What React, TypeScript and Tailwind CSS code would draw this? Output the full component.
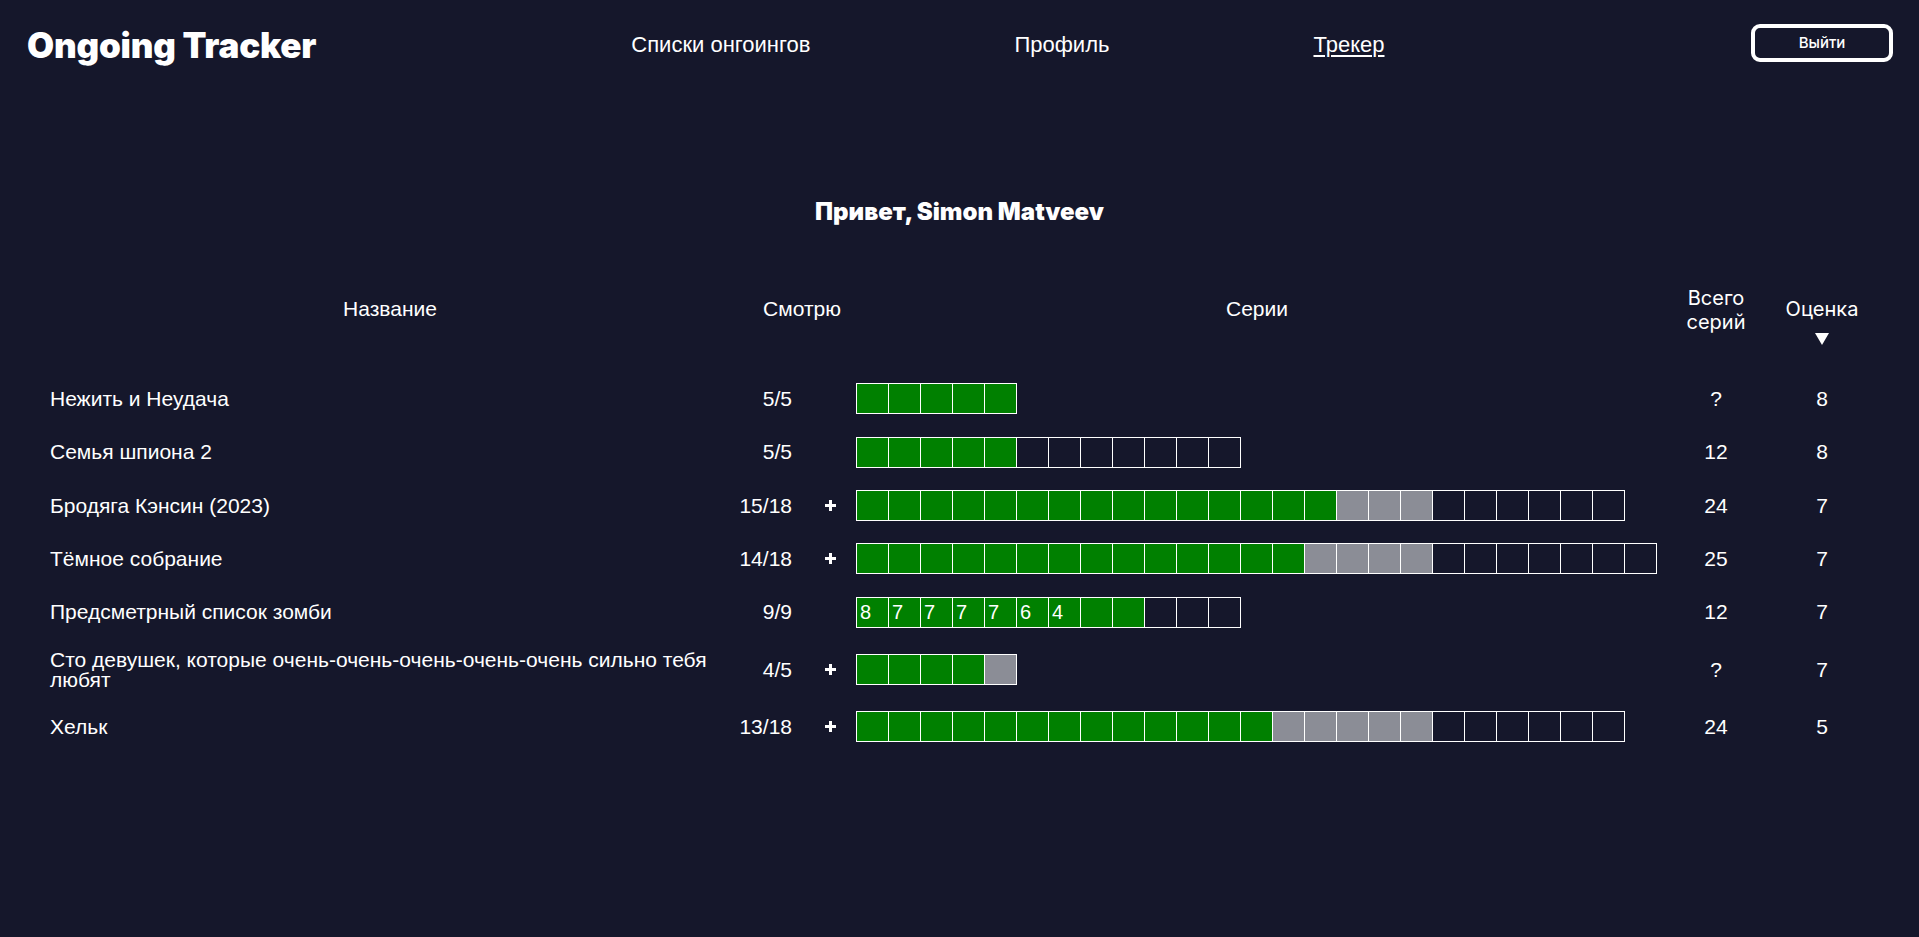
import React from 'react';

type Cell = 'g' | 's' | 'e';

interface Row {
  title: string;
  watched: string;
  plus: boolean;
  green: number;
  gray: number;
  empty: number;
  marks?: string[];
  total: string;
  score: string;
}

const rows: Row[] = [
  { title: 'Нежить и Неудача', watched: '5/5', plus: false, green: 5, gray: 0, empty: 0, total: '?', score: '8' },
  { title: 'Семья шпиона 2', watched: '5/5', plus: false, green: 5, gray: 0, empty: 7, total: '12', score: '8' },
  { title: 'Бродяга Кэнсин (2023)', watched: '15/18', plus: true, green: 15, gray: 3, empty: 6, total: '24', score: '7' },
  { title: 'Тёмное собрание', watched: '14/18', plus: true, green: 14, gray: 4, empty: 7, total: '25', score: '7' },
  {
    title: 'Предсметрный список зомби',
    watched: '9/9',
    plus: false,
    green: 9,
    gray: 0,
    empty: 3,
    marks: ['8', '7', '7', '7', '7', '6', '4'],
    total: '12',
    score: '7',
  },
  {
    title: 'Сто девушек, которые очень-очень-очень-очень-очень сильно тебя любят',
    watched: '4/5',
    plus: true,
    green: 4,
    gray: 1,
    empty: 0,
    total: '?',
    score: '7',
  },
  { title: 'Хельк', watched: '13/18', plus: true, green: 13, gray: 5, empty: 6, total: '24', score: '5' },
];

const cellColor: Record<Cell, string> = {
  g: 'bg-[#008000]',
  s: 'bg-[#8b8d96]',
  e: 'bg-transparent',
};

function PlusIcon() {
  return (
    <svg width="11" height="11" viewBox="0 0 11 11" className="block">
      <rect x="4" y="0" width="3" height="11" fill="white" />
      <rect x="0" y="4" width="11" height="3" fill="white" />
    </svg>
  );
}

function Episodes({ row }: { row: Row }) {
  const cells: Cell[] = [
    ...Array<Cell>(row.green).fill('g'),
    ...Array<Cell>(row.gray).fill('s'),
    ...Array<Cell>(row.empty).fill('e'),
  ];
  return (
    <div className="flex border-l border-y border-white w-max">
      {cells.map((c, i) => (
        <div
          key={i}
          className={`w-8 h-[29px] border-r border-white ${cellColor[c]} text-[20px] leading-[28px] pl-[3px] text-white`}
        >
          {row.marks?.[i] ?? ''}
        </div>
      ))}
    </div>
  );
}

export default function App() {
  return (
    <div className="min-h-[937px] bg-[#15172b] text-white font-['Liberation_Sans',Arial,sans-serif]">
      <header className="h-[90px] flex items-center pl-[27px] pr-[26px]">
        <h1 className="font-['Inter',sans-serif] text-[35px] font-black tracking-[-0.2px] leading-none">
          Ongoing Tracker
        </h1>
        <nav className="ml-[315px] flex gap-[204px] text-[22px] -mt-[2px]">
          <a className="cursor-pointer">Списки онгоингов</a>
          <a className="cursor-pointer">Профиль</a>
          <a className="cursor-pointer underline underline-offset-[3px]">Трекер</a>
        </nav>
        <button className="ml-auto w-[142px] h-[38px] border-4 border-white rounded-[9px] font-['Inter',sans-serif] text-[15px] font-medium -mt-[4px]">
          Выйти
        </button>
      </header>

      <h2 className="mt-[107px] text-center font-['Inter',sans-serif] text-[24px] font-black leading-[30px]">
        Привет, Simon Matveev
      </h2>

      <div className="mt-[58px] pl-[50px]">
        <div className="grid grid-cols-[680px_126px_802px_116px_96px] h-[87px] items-start text-[21px]">
          <div className="text-center pt-[12px] leading-[24px]">Название</div>
          <div className="text-center pt-[12px] pl-[18px] leading-[24px]">Смотрю</div>
          <div className="text-center pt-[12px] leading-[24px]">Серии</div>
          <div className="text-center pt-[1px] leading-[24px] text-[20px] font-['Inter',sans-serif]">
            Всего
            <br />
            серий
          </div>
          <div className="flex flex-col items-center pt-[12px] leading-[24px] text-[20px] font-['Inter',sans-serif]">
            <span>Оценка</span>
            <svg width="14" height="12" viewBox="0 0 14 12" className="mt-[12px]">
              <polygon points="0,0 14,0 7,12" fill="white" />
            </svg>
          </div>
        </div>

        {rows.map((row) => (
          <div
            key={row.title}
            className="grid grid-cols-[680px_126px_802px_116px_96px] items-center py-[11.2px] text-[21px] leading-[19.5px]"
          >
            <div>{row.title}</div>
            <div className="flex items-center">
              <span className="w-[62px] text-right">{row.watched}</span>
              {row.plus && (
                <span className="pl-[33px]">
                  <PlusIcon />
                </span>
              )}
            </div>
            <Episodes row={row} />
            <div className="text-center">{row.total}</div>
            <div className="text-center">{row.score}</div>
          </div>
        ))}
      </div>
    </div>
  );
}
